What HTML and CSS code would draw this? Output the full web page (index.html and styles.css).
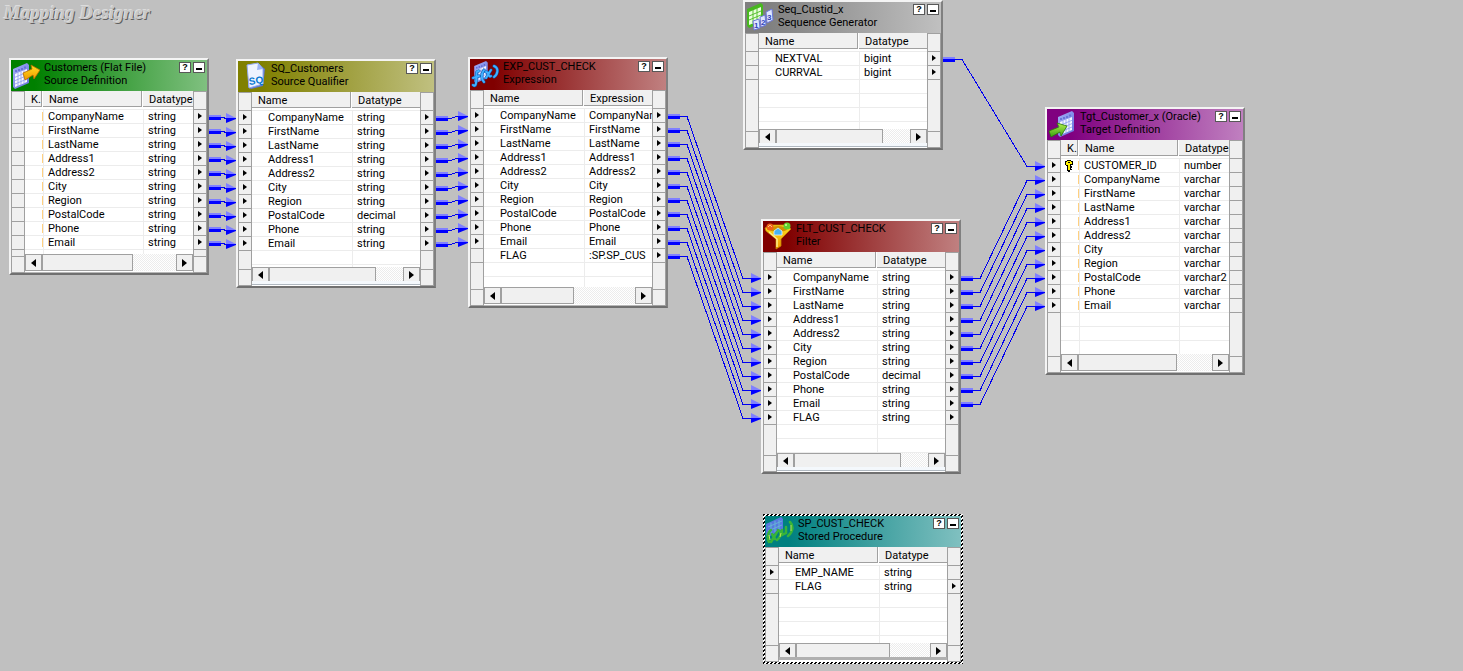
FILE: index.html
```html
<!DOCTYPE html>
<html lang="en">
<head>
<meta charset="utf-8">
<title>Mapping Designer</title>
<link rel="stylesheet" href="styles.css">
</head>
<body>
<svg class="defs" aria-hidden="true">
  <defs>
    <linearGradient id="g-sheet" x1="0" y1="0" x2="1" y2="1"><stop offset="0" stop-color="#a4b0f8"/><stop offset="1" stop-color="#6470dc"/></linearGradient>
    <linearGradient id="g-gold" x1="0" y1="0" x2="0" y2="1"><stop offset="0" stop-color="#ffe020"/><stop offset="1" stop-color="#f09800"/></linearGradient>
    <linearGradient id="g-green" x1="0" y1="0" x2="0" y2="1"><stop offset="0" stop-color="#b4f050"/><stop offset="1" stop-color="#38a010"/></linearGradient>
    <symbol id="sheet" viewBox="0 0 18 26">
      <path d="M1 6 L15 0 L17 2 V20 L3 26 L1 24Z" fill="url(#g-sheet)"/>
      <path d="M3 11 L15 6 V19 L3 24Z" fill="#f4f6ff"/>
      <path d="M3 14.300 L15 9.300 M3 17.600 L15 12.600 M3 21 L15 16 M6 9.800 V23 M9 8.500 V22 M12 7.300 V20.500" stroke="#8c9cf0" stroke-width=".8"/>
      <path d="M4 7 V9 M7 6 V8 M10 5 V7 M13 3.500 V5.500" stroke="#5c68d0" stroke-width="1.500"/>
    </symbol>
    <symbol id="icon-source" viewBox="0 0 28 28">
      <use href="#sheet" x="0" y="2" width="18" height="26"/>
      <path d="M11 12 L20 8 L19 4 L28 9 L22 18 L21 14 L13 19Z" fill="url(#g-gold)" stroke="#b86a00" stroke-width=".8"/>
    </symbol>
    <symbol id="icon-qualifier" viewBox="0 0 28 28">
      <path d="M9 2 H20 L26 7 L24 24 L12 27 L9 25Z" fill="#6078d0"/>
      <path d="M8 3 L19 1 L24 7 V22 L10 26Z" fill="#eef3ff" stroke="#92a8ec"/>
      <path d="M19 1 L18 8 L24 7Z" fill="#9db4f5"/>
      <text x="10" y="22" class="icon-sq" transform="rotate(-8 17 20)">SQ</text>
    </symbol>
    <symbol id="icon-expression" viewBox="0 0 28 28">
      <use href="#sheet" x="1" y="1" width="18" height="22"/>
      <g fill="none" stroke-linecap="round" stroke-linejoin="round">
        <g stroke="#0858b0" stroke-width="3">
          <path d="M8 11 C4 10 6 17 5 23 C5 26 3 26 2 25 M2 18 L8 16 M13 10 C10 14 10 19 13 22 M15 12 C18 11 17 18 20 16 M20 10 L15 18 M23 6 C28 8 27 14 23 17"/>
        </g>
        <g stroke="#40b0ff" stroke-width="2">
          <path d="M8 11 C4 10 6 17 5 23 C5 26 3 26 2 25 M2 18 L8 16 M13 10 C10 14 10 19 13 22 M15 12 C18 11 17 18 20 16 M20 10 L15 18 M23 6 C28 8 27 14 23 17"/>
        </g>
      </g>
    </symbol>
    <symbol id="icon-sequence" viewBox="0 0 28 28">
      <path d="M1 6 L15 0 L17 2 V19 L3 25 L1 23Z" fill="#48b820"/>
      <path d="M3 9 L15 4 V17 L3 22Z" fill="#eaffdc"/>
      <path d="M3 13 L15 8 M3 17 L15 12 M7 7 V20 M11 5 V19" stroke="#58c030"/>
      <g fill="#dfe6ff" stroke="#6c78d8">
        <path d="M7 18 L13 16 L14 25 L8 27Z"/><path d="M14 14 L19 12 L20 22 L15 24Z"/><path d="M20 9 L26 6 L27 17 L21 20Z"/>
      </g>
      <g class="icon-digit"><text x="8" y="25">1</text><text x="15" y="22">2</text><text x="21" y="17">3</text></g>
    </symbol>
    <symbol id="icon-filter" viewBox="0 0 28 28">
      <path d="M1 6 L7 3 H22 L27 7 L17 17 V24 L12 27 V17 L2 9Z" fill="url(#g-gold)" stroke="#c08000" stroke-width=".8"/>
      <path d="M5 10 L13 17 V25" fill="none" stroke="#fff08c" stroke-width="1.500"/>
      <ellipse cx="14" cy="7" rx="9" ry="3" fill="#d09000"/>
      <circle cx="6" cy="5" r="3.500" fill="#f06018"/><path d="M4 5 L6 3 L8 5" stroke="#ffc080" fill="none"/>
      <circle cx="23" cy="4" r="3.500" fill="#60d030"/><circle cx="22" cy="3" r="1" fill="#d4ffa0"/>
      <path d="M10 9 L14 6 L18 9 V13 H10Z" fill="#48b4f4" stroke="#e0f4ff" stroke-width=".8"/>
    </symbol>
    <symbol id="icon-procedure" viewBox="0 0 28 28">
      <path d="M0 7 L15 0 L17 2 V12 L2 20 L0 18Z" fill="#5878e0"/>
      <path d="M2 10 L16 4 M2 14 L16 8 M5 6 V16 M9 4 V15 M13 3 V12" stroke="#64b4d4"/>
      <g fill="none" stroke="#38b438" stroke-width="2.500" stroke-linecap="round">
        <path d="M5 13 C1 16 1 22 3 25 M6 17 L9 22 M11 15 L5 25 M12 13 C16 15 15 20 11 23 M16 13 V18 L20 16 V10 M24 5 C28 9 27 15 22 19"/>
      </g>
      <path d="M3 18 L4 23 M15 16 L14 20 M25 8 L25 14" stroke="#c0e850" fill="none"/>
    </symbol>
    <symbol id="icon-target" viewBox="0 0 28 28">
      <use href="#sheet" x="9" y="1" width="18" height="26"/>
      <path d="M1 21 L11 17 L9 13 L19 16 L13 26 L12 22 L3 27Z" fill="url(#g-green)" stroke="#287808" stroke-width=".8"/>
    </symbol>
    <symbol id="icon-key" viewBox="0 0 8 12">
      <path d="M2 0 H6 V1 H8 V5 H6 V6 H7 V8 H6 V9 H7 V10 H5 V12 H3 V11 H2 V6 H1 V5 H0 V1 H2Z" fill="#000"/>
      <path d="M2 1 H6 V2 H7 V4 H5 V6 H5 V10 H3 V5 H1 V2 H2Z" fill="#fff000"/>
      <path d="M3 2 H5 V3 H3Z" fill="#000"/>
    </symbol>
  </defs>
</svg>
<main class="workspace">
  <h1 class="workspace-title">Mapping Designer</h1>
  <svg class="links" id="links" aria-hidden="true"></svg>
  <div id="nodes"></div>
</main>
<script src="mapping.js"></script>
</body>
</html>
```
FILE: styles.css
```css
* { box-sizing: border-box; }

body {
  margin: 0;
  background: #c0c0c0;
  color: #000;
  font: 11px/14px Roboto, "Liberation Sans", Arial, sans-serif;
}

button { margin: 0; padding: 0; font: inherit; color: inherit; }

.defs { position: absolute; width: 0; height: 0; }

.workspace { position: relative; min-height: 100vh; overflow: hidden; }

.workspace-title {
  margin: 0;
  padding: 1px 4px;
  font: italic bold 19px/24px "Liberation Serif", "Times New Roman", serif;
  color: #c8c8c8;
  text-shadow: -1px -1px 0 #dcdcdc, 1px 1px 0 #606060;
}

.links { position: absolute; inset: 0; width: 100%; height: 100%; }
.link-line { fill: none; stroke: #0000f0; shape-rendering: crispEdges; }
.link-dark { fill: #0000ff; }
.link-light { fill: #8080ff; }

.node {
  position: absolute;
  display: flex;
  flex-direction: column;
  width: 200px;
  border: 2px solid;
  border-color: #f4f4f4 #808080 #707070 #f4f4f4;
}
.node.selected {
  border-color: transparent;
  background: linear-gradient(135deg, #000 25%, #fff 25% 50%, #000 50% 75%, #fff 75%) 0 0 / 4px 4px border-box;
}

.node-head {
  display: flex;
  flex: none;
  gap: 4px;
  height: 31px;
  padding: 1px 2px 0 1px;
  background: linear-gradient(to right, var(--from) 12%, var(--to));
}
.green { --from: #008000; --to: #80c080; }
.olive { --from: #808000; --to: #c0c080; }
.red { --from: #800000; --to: #c08080; }
.gray { --from: #808080; --to: #c0c0c0; }
.teal { --from: #008080; --to: #80c0c0; }
.purple { --from: #800080; --to: #c080c0; }

.node-icon { flex: none; width: 28px; height: 28px; }
.icon-sq { font: bold 10px "Liberation Sans", sans-serif; fill: #0878d0; }
.icon-digit { font: bold 8px "Liberation Sans", sans-serif; fill: #3444b8; }

.node-title { flex: 1; min-width: 0; margin: 0; font-size: 11px; font-weight: normal; line-height: 13px; white-space: nowrap; }
.node-title span { display: block; }

.node-buttons { display: flex; flex: none; gap: 2px; padding-top: 1px; }
.node-button {
  display: flex;
  align-items: center;
  justify-content: center;
  width: 12px;
  height: 11px;
  border: 1px solid #585858;
  background: #fff;
  font: bold 9px/9px "Liberation Sans", sans-serif;
}
.node-button.minimize::before { content: ""; width: 6px; height: 2px; margin-top: 2px; background: #000; }

.node-body { display: grid; grid-template-columns: 14px 1fr 14px; flex: 1; min-height: 0; background: #fff; }

.gutter { display: flex; flex-direction: column; background: #f0f0f0; border: solid #a0a0a0; border-width: 1px 1px 0; }
.port { display: flex; align-items: center; justify-content: center; flex: none; height: 14px; border-bottom: 1px solid #a0a0a0; }
.port.first { height: 18px; }
.port.rest { flex: 1; min-height: 0; height: auto; }
.port.last { height: 16px; }
.port.on::before { content: ""; margin-bottom: 2px; border: solid transparent; border-width: 3px 0 3px 4px; border-left-color: #000; }

.pane { display: flex; flex-direction: column; min-width: 0; min-height: 0; }
.grid {
  flex: 1;
  min-height: 0;
  overflow: hidden;
  background:
    linear-gradient(#ececec, #ececec) 100px 0 / 1px 100% no-repeat,
    linear-gradient(transparent 13px, #ececec 13px) 0 5px / 100% 14px;
}
.keyed .grid {
  background:
    linear-gradient(#ececec, #ececec) 18px 0 / 1px 100% no-repeat,
    linear-gradient(#ececec, #ececec) 118px 0 / 1px 100% no-repeat,
    linear-gradient(transparent 13px, #ececec 13px) 0 5px / 100% 14px;
}

.fields { width: 100%; table-layout: fixed; border-collapse: separate; border-spacing: 0; }
.col-key { width: 18px; }
.col-name { width: 100px; }
.fields th {
  height: 19px;
  padding: 0;
  border-bottom: 1px solid #ececec;
  background: #fff;
  font-weight: normal;
  text-align: left;
  vertical-align: top;
}
.fields th span {
  display: block;
  height: 16px;
  padding: 2px 0 0 6px;
  border: solid #a0a0a0;
  border-width: 0 1px 1px 0;
  background: #f0f0f0;
  line-height: 13px;
  white-space: nowrap;
}
.fields th:not(:last-child) span { margin-right: 1px; }
.fields th:last-child span { border-right: 0; }
.fields td { height: 14px; padding: 0 0 0 5px; overflow: hidden; white-space: nowrap; }
.plain .fields td:first-child { padding-left: 16px; }
.fields .key-cell { padding: 0 1px 0 4px; line-height: 0; background: linear-gradient(#ffd080, #ffd080) 17px 2px / 1px 9px no-repeat; }
.key-icon { display: block; width: 8px; height: 12px; }

.scrollbar {
  display: flex;
  flex: none;
  height: 17px;
  margin-bottom: 2px;
  background: repeating-conic-gradient(#ececec 0 25%, #fff 0 50%) 0 0 / 2px 2px;
  box-shadow: 0 1px 0 #fff, 0 2px 0 #b8b8b8;
}
.scroll-button, .scroll-thumb { height: 17px; border: 1px solid #a0a0a0; background: #f0f0f0; }
.scroll-button { display: flex; align-items: center; justify-content: center; width: 17px; }
.scroll-button::before { content: ""; border: 4px solid transparent; }
.scroll-button.back::before { border-width: 4px 5px 4px 0; border-right-color: #000; }
.scroll-button.forward { margin-left: auto; }
.scroll-button.forward::before { border-width: 4px 0 4px 5px; border-left-color: #000; }
.short .scrollbar { height: 14px; margin-bottom: 5px; box-shadow: 0 3px 0 #f4f8fc, 0 4px 0 #b0b8c0; }
.short .scroll-button, .short .scroll-thumb { height: 14px; border-bottom: 0; }
.short.selected .scrollbar { box-shadow: 0 3px 0 #b0b0b0; }
```
FILE: mapping.js
```js
const common = ["CompanyName", "FirstName", "LastName", "Address1", "Address2", "City", "Region", "PostalCode", "Phone", "Email"];
const strings = common.map(name => [name, "string"]);
const decimals = common.map(name => [name, name === "PostalCode" ? "decimal" : "string"]);

// ins / outs: the row numbers that carry a port arrow on that side
const range = n => Array.from({ length: n }, (_, i) => i);
const nodes = {
  src: { x: 9, y: 58, h: 217, color: "green", icon: "source", title: "Customers (Flat File)", kind: "Source Definition",
    keyed: true, rows: strings, ins: [], outs: range(10), thumb: 91 },
  sq: { x: 236, y: 59, h: 229, color: "olive", icon: "qualifier", title: "SQ_Customers", kind: "Source Qualifier",
    short: true, rows: decimals, ins: range(10), outs: range(10), thumb: 107 },
  exp: { x: 468, y: 57, h: 251, color: "red", icon: "expression", title: "EXP_CUST_CHECK", kind: "Expression",
    second: "Expression", rows: [...common.map(n => [n, n]), ["FLAG", ":SP.SP_CUS"]], ins: range(10), outs: range(11), thumb: 73 },
  seq: { x: 743, y: 0, h: 150, color: "gray", icon: "sequence", title: "Seq_Custid_x", kind: "Sequence Generator",
    short: true, rows: [["NEXTVAL", "bigint"], ["CURRVAL", "bigint"]], ins: [], outs: [0, 1], thumb: 107 },
  flt: { x: 761, y: 219, h: 255, color: "red", icon: "filter", title: "FLT_CUST_CHECK", kind: "Filter",
    short: true, rows: [...decimals, ["FLAG", "string"]], ins: range(11), outs: range(11), thumb: 107 },
  sp: { x: 763, y: 514, h: 150, color: "teal", icon: "procedure", title: "SP_CUST_CHECK", kind: "Stored Procedure",
    short: true, selected: true, rows: [["EMP_NAME", "string"], ["FLAG", "string"]], ins: [0], outs: [1], thumb: 94 },
  tgt: { x: 1045, y: 107, h: 268, color: "purple", icon: "target", title: "Tgt_Customer_x (Oracle)", kind: "Target Definition",
    keyed: true, rows: [["CUSTOMER_ID", "number", true], ...common.map(n => [n, n === "PostalCode" ? "varchar2" : "varchar"])],
    ins: range(11), outs: [], thumb: 99 }
};

const gutter = (n, on) => `<div class="gutter"><div class="port first"></div>${
  n.rows.map((_, i) => `<div class="port${on.includes(i) ? " on" : ""}"></div>`).join("")
}<div class="port rest"></div><div class="port last"></div></div>`;

const key = `<svg class="key-icon"><use href="#icon-key"/></svg>`;

const render = n => `
<section class="node ${n.color} ${n.keyed ? "keyed" : "plain"}${n.short ? " short" : ""}${n.selected ? " selected" : ""}"
  style="left:${n.x}px;top:${n.y}px;height:${n.h}px">
  <header class="node-head">
    <svg class="node-icon" aria-hidden="true"><use href="#icon-${n.icon}"/></svg>
    <h2 class="node-title"><span>${n.title}</span><span>${n.kind}</span></h2>
    <div class="node-buttons">
      <button class="node-button" type="button" aria-label="Help">?</button>
      <button class="node-button minimize" type="button" aria-label="Minimize"></button>
    </div>
  </header>
  <div class="node-body">
    ${gutter(n, n.ins)}
    <div class="pane">
      <div class="grid"><table class="fields">
        <colgroup>${n.keyed ? '<col class="col-key">' : ""}<col class="col-name"><col></colgroup>
        <thead><tr>${n.keyed ? "<th><span>K.</span></th>" : ""}<th><span>Name</span></th><th><span>${n.second || "Datatype"}</span></th></tr></thead>
        <tbody>${n.rows.map(([name, type, isKey]) =>
          `<tr>${n.keyed ? `<td class="key-cell">${isKey ? key : ""}</td>` : ""}<td>${name}</td><td>${type}</td></tr>`).join("")}</tbody>
      </table></div>
      <div class="scrollbar">
        <button class="scroll-button back" type="button" aria-label="Scroll left"></button>
        <div class="scroll-thumb" style="width:${n.thumb}px"></div>
        <button class="scroll-button forward" type="button" aria-label="Scroll right"></button>
      </div>
    </div>
    ${gutter(n, n.outs)}
  </div>
</section>`;

document.getElementById("nodes").innerHTML = Object.values(nodes).map(render).join("");

const link = (from, a, to, b) => {
  const x1 = from.x + 200, y1 = from.y + 59 + 14 * a;
  const x2 = to.x, y2 = to.y + 59 + 14 * b;
  const near = x2 - x1 < 50;
  const bend1 = near ? x1 + 15 : x1 + 19;
  const bend2 = near ? x2 - 12 : x2 - 18;
  return `<path class="link-line" d="M${x1} ${y1 + .5}H${bend1}L${bend2} ${y2 + .5}H${x2}"/>
    <rect class="link-light" x="${x1}" y="${y1 - 2}" width="12" height="2"/>
    <rect class="link-dark" x="${x1}" y="${y1}" width="12" height="3"/>
    <path class="link-light" d="M${x2 - 10} ${y2 - 5}L${x2} ${y2}H${x2 - 10}Z"/>
    <path class="link-dark" d="M${x2 - 10} ${y2}H${x2}V${y2 + 1}L${x2 - 10} ${y2 + 5}Z"/>`;
};

const { src, sq, exp, seq, flt, tgt } = nodes;
document.getElementById("links").innerHTML = [
  ...range(10).map(i => link(src, i, sq, i)),
  ...range(10).map(i => link(sq, i, exp, i)),
  ...range(11).map(i => link(exp, i, flt, i)),
  ...range(10).map(i => link(flt, i, tgt, i + 1)),
  link(seq, 0, tgt, 0)
].join("");
```
